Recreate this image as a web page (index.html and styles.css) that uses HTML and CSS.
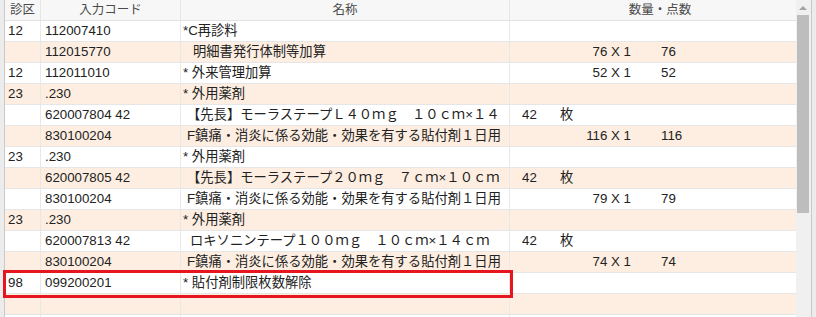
FILE: index.html
```html
<!DOCTYPE html>
<html lang="ja">
<head>
<meta charset="utf-8">
<link rel="stylesheet" href="styles.css">
</head>
<body>
<div class="frame">
  <div class="grid">
    <div class="row head">
      <div class="cell c-ku">診区</div>
      <div class="cell c-code">入力コード</div>
      <div class="cell c-name">名称</div>
      <div class="cell c-qty">数量・点数</div>
    </div>
    <div class="row">
      <div class="cell c-ku">12</div><div class="cell c-code">112007410</div>
      <div class="cell c-name">*C再診料</div><div class="cell c-qty"></div>
    </div>
    <div class="row alt">
      <div class="cell c-ku"></div><div class="cell c-code">112015770</div>
      <div class="cell c-name in2">明細書発行体制等加算</div>
      <div class="cell c-qty"><span class="mul">76 X 1</span><span class="pt">76</span></div>
    </div>
    <div class="row">
      <div class="cell c-ku">12</div><div class="cell c-code">112011010</div>
      <div class="cell c-name">* 外来管理加算</div>
      <div class="cell c-qty"><span class="mul">52 X 1</span><span class="pt">52</span></div>
    </div>
    <div class="row alt">
      <div class="cell c-ku">23</div><div class="cell c-code">.230</div>
      <div class="cell c-name">* 外用薬剤</div><div class="cell c-qty"></div>
    </div>
    <div class="row">
      <div class="cell c-ku"></div><div class="cell c-code">620007804 42</div>
      <div class="cell c-name in1">【先長】モーラステープＬ４０ｍｇ　１０ｃｍ×１４</div>
      <div class="cell c-qty"><span class="num">42</span><span class="unit">枚</span></div>
    </div>
    <div class="row alt">
      <div class="cell c-ku"></div><div class="cell c-code">830100204</div>
      <div class="cell c-name in1">F鎮痛・消炎に係る効能・効果を有する貼付剤１日用</div>
      <div class="cell c-qty"><span class="mul">116 X 1</span><span class="pt">116</span></div>
    </div>
    <div class="row">
      <div class="cell c-ku">23</div><div class="cell c-code">.230</div>
      <div class="cell c-name">* 外用薬剤</div><div class="cell c-qty"></div>
    </div>
    <div class="row alt">
      <div class="cell c-ku"></div><div class="cell c-code">620007805 42</div>
      <div class="cell c-name in1">【先長】モーラステープ２０ｍｇ　７ｃｍ×１０ｃｍ</div>
      <div class="cell c-qty"><span class="num">42</span><span class="unit">枚</span></div>
    </div>
    <div class="row">
      <div class="cell c-ku"></div><div class="cell c-code">830100204</div>
      <div class="cell c-name in1">F鎮痛・消炎に係る効能・効果を有する貼付剤１日用</div>
      <div class="cell c-qty"><span class="mul">79 X 1</span><span class="pt">79</span></div>
    </div>
    <div class="row alt">
      <div class="cell c-ku">23</div><div class="cell c-code">.230</div>
      <div class="cell c-name">* 外用薬剤</div><div class="cell c-qty"></div>
    </div>
    <div class="row">
      <div class="cell c-ku"></div><div class="cell c-code">620007813 42</div>
      <div class="cell c-name in3">ロキソニンテープ１００ｍｇ　１０ｃｍ×１４ｃｍ</div>
      <div class="cell c-qty"><span class="num">42</span><span class="unit">枚</span></div>
    </div>
    <div class="row alt">
      <div class="cell c-ku"></div><div class="cell c-code">830100204</div>
      <div class="cell c-name in1">F鎮痛・消炎に係る効能・効果を有する貼付剤１日用</div>
      <div class="cell c-qty"><span class="mul">74 X 1</span><span class="pt">74</span></div>
    </div>
    <div class="row">
      <div class="cell c-ku">98</div><div class="cell c-code">099200201</div>
      <div class="cell c-name">* 貼付剤制限枚数解除</div><div class="cell c-qty"></div>
    </div>
    <div class="row alt">
      <div class="cell c-ku"></div><div class="cell c-code"></div>
      <div class="cell c-name"></div><div class="cell c-qty"></div>
    </div>
    <div class="row">
      <div class="cell c-ku"></div><div class="cell c-code"></div>
      <div class="cell c-name"></div><div class="cell c-qty"></div>
    </div>
  </div>
  <div class="scrollbar">
    <div class="arrow"></div>
    <div class="thumb"></div>
  </div>
  <div class="highlight"></div>
</div>
</body>
</html>
```

FILE: styles.css
```css
html, body {
  margin: 0;
  padding: 0;
}
body {
  background: #ececec;
  font-family: "Liberation Sans", "Noto Sans CJK JP", sans-serif;
  font-size: 13.3px;
  color: #222;
}
.frame {
  position: relative;
  display: flex;
  height: 317px;
  overflow: hidden;
  padding-left: 4px;
  padding-right: 4px;
}
.grid {
  flex: 1;
  min-width: 0;
  display: flex;
  flex-direction: column;
  background: #fff;
  border-left: 1px solid #c9c9c9;
}
.row {
  flex: none;
  display: grid;
  grid-template-columns: 36px 140px 329px 1fr;
  height: 21px;
  box-sizing: border-box;
  border-bottom: 1px solid #e6e6e6;
  background: #fff;
}
.row.alt {
  background: #fdeee1;
}
.cell {
  box-sizing: border-box;
  border-right: 1px solid #e8e8e8;
  line-height: 20px;
  white-space: nowrap;
  overflow: visible;
}
.c-ku { padding-left: 3px; }
.c-code { padding-left: 4px; }
.c-name { padding-left: 2px; }
.c-name.in1 { padding-left: 6px; }
.c-name.in2 { padding-left: 12px; }
.c-name.in3 { padding-left: 9px; }
.c-qty {
  border-right: none;
  display: grid;
  grid-template-columns: 12px 38px 24px 47px 30px 1fr;
}
.num { grid-column: 2; }
.unit { grid-column: 3; }
.mul { grid-column: 4; text-align: right; }
.pt { grid-column: 6; }

.row.head {
  background: #f7f7f7;
  border-bottom: 1px solid #e2e2e2;
}
.row.head .cell {
  display: flex;
  justify-content: center;
  padding: 0;
  font-size: 12.5px;
  color: #4a4a4a;
  border-right-color: #e6e6e6;
}
.row.head .c-qty {
  padding-left: 14px;
}

.scrollbar {
  width: 15px;
  flex: none;
  background: #f0f0f0;
  border-right: 1px solid #c9c9c9;
  display: flex;
  flex-direction: column;
  align-items: flex-start;
}
.arrow {
  margin: 6px 0 0 3px;
  width: 0;
  height: 0;
  border-left: 4px solid transparent;
  border-right: 4px solid transparent;
  border-bottom: 4px solid #a3a3a3;
}
.thumb {
  margin: 5px 0 0 1px;
  width: 12px;
  height: 198px;
  background: #bdbdbd;
}
.highlight {
  position: absolute;
  left: 3px;
  top: 270px;
  width: 510px;
  height: 28px;
  box-sizing: border-box;
  border: 3px solid #e5161f;
}
```
